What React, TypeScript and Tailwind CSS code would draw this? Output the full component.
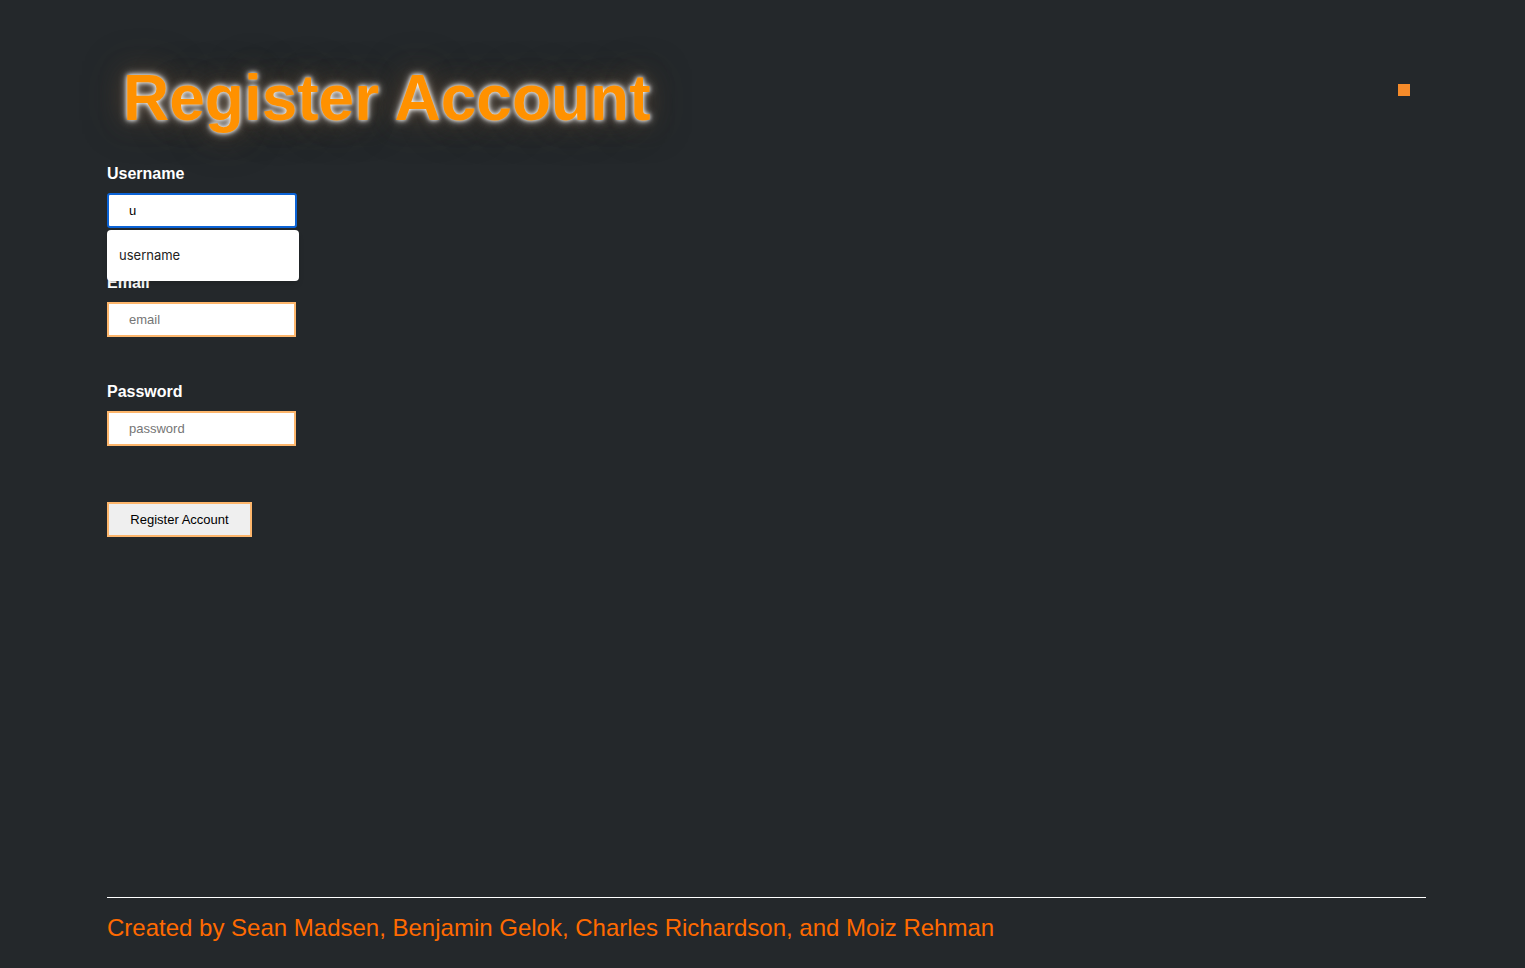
export default function App() {
  return (
    <div className="min-h-[968px] bg-[#24282b] font-['Liberation_Sans',Arial,sans-serif] relative">
      <div className="absolute left-[1398px] top-[84px] w-3 h-3 bg-[#f58b2a]" />
      <div className="pl-[107px] w-[1426px] flex flex-col min-h-[968px]">
        <div className="pt-[42px]">
          <h1 className="inline-block pl-[16px] pr-[30px] text-[64px] leading-[112px] font-bold text-[#ff9100] [text-shadow:0_0_4px_#fff,0_0_9px_#fffc,0_0_24px_#5a4633,0_0_40px_#3f3429]">
            Register Account
          </h1>
        </div>
        <form className="flex flex-col items-start">
          <label className="block text-white font-bold text-base leading-[18px] mt-[11px]">Username</label>
          <div className="relative mt-[10px]">
            <input
              className="w-[190px] h-[35px] bg-white border-2 border-[#0b63d6] rounded-[3px] px-[20px] text-[13px] text-black outline-none"
              defaultValue="u"
            />
            <div className="absolute left-0 top-[37px] w-[192px] h-[51px] bg-white rounded-[4px] shadow-md flex items-center pl-[12px] text-[13px] text-[#222] font-['Inter',sans-serif] z-10">
              username
            </div>
          </div>
          <label className="block text-white font-bold text-base leading-[18px] mt-[46px]">Email</label>
          <input
            className="mt-[10px] w-[189px] h-[35px] bg-white border-2 border-[#fdb66c] px-[20px] text-[13px] outline-none placeholder:text-[#757575]"
            placeholder="email"
          />
          <label className="block text-white font-bold text-base leading-[18px] mt-[46px]">Password</label>
          <input
            type="password"
            className="mt-[10px] w-[189px] h-[35px] bg-white border-2 border-[#fdb66c] px-[20px] text-[13px] outline-none placeholder:text-[#757575]"
            placeholder="password"
          />
          <button
            type="button"
            className="mt-[56px] w-[145px] h-[35px] bg-[#efefef] border-2 border-[#fdb66c] text-[13px] text-black"
          >
            Register Account
          </button>
        </form>
        <div className="mt-auto">
          <div className="h-px bg-white mb-[16px]" />
          <p className="text-[24px] leading-[28px] text-[#ff6a00] pb-[26px]">
            Created by Sean Madsen, Benjamin Gelok, Charles Richardson, and Moiz Rehman
          </p>
        </div>
      </div>
    </div>
  );
}
